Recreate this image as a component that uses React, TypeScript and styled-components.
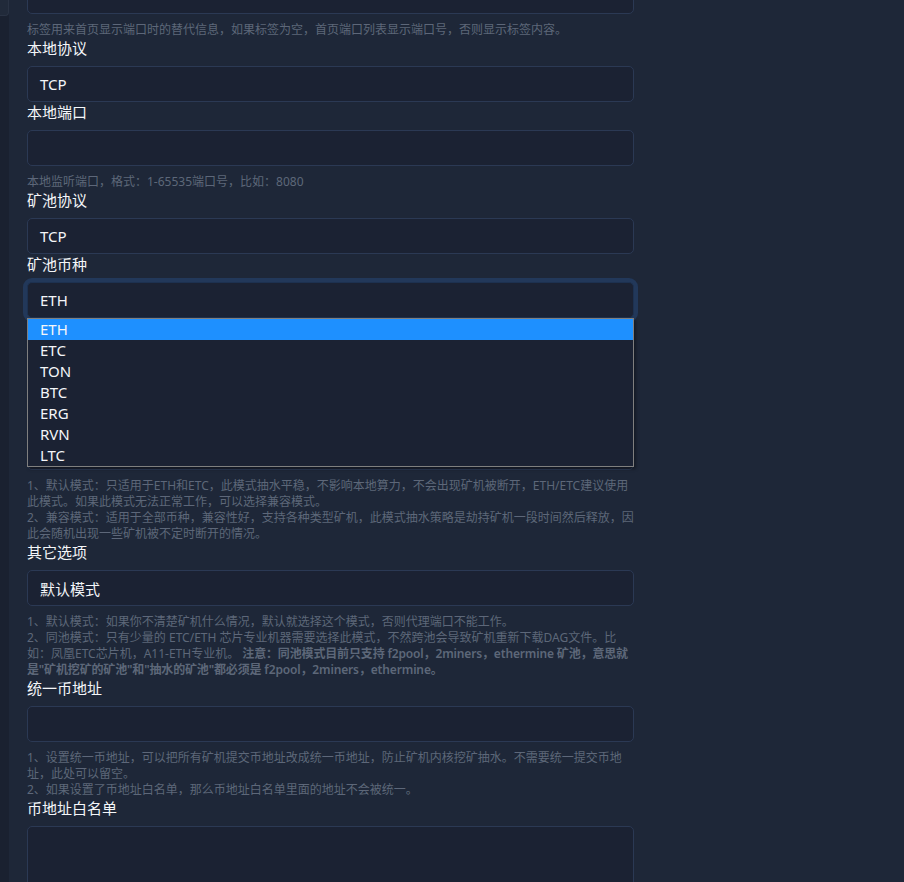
import React from "react";
import styled, { createGlobalStyle } from "styled-components";

const GlobalStyle = createGlobalStyle`
  html, body {
    margin: 0;
    padding: 0;
    background: #1e2738;
    height: 100%;
    overflow: hidden;
  }
  * { box-sizing: border-box; }
`;

const Page = styled.div`
  display: flex;
  width: 904px;
  height: 882px;
  overflow: hidden;
  background: #1e2738;
  font-family: "Noto Sans", "Noto Sans CJK SC", sans-serif;
`;

const SideStrip = styled.div`
  width: 9px;
  flex: none;
  background: #1a2130;
  display: flex;
  flex-direction: column;
`;

const StripKnob = styled.div`
  height: 16px;
  background: #212a3a;
  border: 1px solid #2a3344;
  border-top: none;
  border-left: none;
  border-bottom-right-radius: 4px;
`;

const Main = styled.div`
  flex: 1;
  padding-left: 18px;
  overflow: hidden;
`;

const Form = styled.div`
  width: 607px;
  margin-top: -22px;
  display: flex;
  flex-direction: column;
`;

const Label = styled.div`
  font-size: 15px;
  line-height: 20px;
  height: 20px;
  color: #f4f6f9;
  margin-bottom: 8px;
  white-space: nowrap;
`;

const Field = styled.div<{ $focused?: boolean; $tall?: boolean }>`
  height: ${(p) => (p.$tall ? "120px" : "36px")};
  flex: none;
  background: #1b2233;
  border: 1px solid ${(p) => (p.$focused ? "#1d3150" : "#2b3954")};
  border-radius: 5px;
  padding: 0 12px;
  display: flex;
  align-items: ${(p) => (p.$tall ? "flex-start" : "center")};
  font-size: 15px;
  color: #f4f6f9;
  box-shadow: ${(p) => (p.$focused ? "0 0 0 4px #22385a" : "none")};
`;

const Hint = styled.div`
  margin-top: 8px;
  font-size: 12px;
  line-height: 16px;
  min-height: 16px;
  color: #5d6779;
`;

const Strong = styled.b`
  font-weight: 600;
  letter-spacing: -0.15px;
`;

const SelectWrap = styled.div`
  position: relative;
  display: flex;
  flex-direction: column;
`;

const Dropdown = styled.ul`
  position: absolute;
  left: 0;
  right: 0;
  top: 36px;
  margin: 0;
  padding: 0;
  list-style: none;
  background: #1b2233;
  border: 1px solid #7f7f7f;
  box-shadow: 2px 2px 3px rgba(0, 0, 0, 0.35);
  z-index: 10;
`;

const Option = styled.li<{ $active?: boolean }>`
  height: 21px;
  line-height: 21px;
  padding-left: 12px;
  font-size: 15px;
  color: #f4f6f9;
  background: ${(p) => (p.$active ? "#1e90ff" : "transparent")};
`;

const coins = ["ETH", "ETC", "TON", "BTC", "ERG", "RVN", "LTC"];

export default function App() {
  return (
    <>
      <GlobalStyle />
      <Page>
        <SideStrip>
          <StripKnob />
        </SideStrip>
        <Main>
          <Form>
            <Field />
            <Hint>标签用来首页显示端口时的替代信息，如果标签为空，首页端口列表显示端口号，否则显示标签内容。</Hint>

            <Label>本地协议</Label>
            <Field>TCP</Field>

            <Label>本地端口</Label>
            <Field />
            <Hint>本地监听端口，格式：1-65535端口号，比如：8080</Hint>

            <Label>矿池协议</Label>
            <Field>TCP</Field>

            <Label>矿池币种</Label>
            <SelectWrap>
              <Field $focused>ETH</Field>
              <Dropdown>
                {coins.map((c, i) => (
                  <Option key={c} $active={i === 0}>
                    {c}
                  </Option>
                ))}
              </Dropdown>
            </SelectWrap>
            {/* fields covered by the open dropdown */}
            <Hint aria-hidden />
            <Label aria-hidden />
            <Field aria-hidden />
            <Label aria-hidden />
            <Field aria-hidden />
            <Hint>
              1、默认模式：只适用于ETH和ETC，此模式抽水平稳，不影响本地算力，不会出现矿机被断开，ETH/ETC建议使用此模式。如果此模式无法正常工作，可以选择兼容模式。
              <br />
              2、兼容模式：适用于全部币种，兼容性好，支持各种类型矿机，此模式抽水策略是劫持矿机一段时间然后释放，因此会随机出现一些矿机被不定时断开的情况。
            </Hint>

            <Label>其它选项</Label>
            <Field>默认模式</Field>
            <Hint>
              1、默认模式：如果你不清楚矿机什么情况，默认就选择这个模式，否则代理端口不能工作。
              <br />
              2、同池模式：只有少量的 ETC/ETH 芯片专业机器需要选择此模式，不然跨池会导致矿机重新下载DAG文件。比如：凤凰ETC芯片机，A11-ETH专业机。{" "}
              <Strong>
                注意：同池模式目前只支持 f2pool，2miners，ethermine 矿池，意思就是"矿机挖矿的矿池"和"抽水的矿池"都必须是 f2pool，2miners，ethermine。
              </Strong>
            </Hint>

            <Label>统一币地址</Label>
            <Field />
            <Hint>
              1、设置统一币地址，可以把所有矿机提交币地址改成统一币地址，防止矿机内核挖矿抽水。不需要统一提交币地址，此处可以留空。
              <br />
              2、如果设置了币地址白名单，那么币地址白名单里面的地址不会被统一。
            </Hint>

            <Label>币地址白名单</Label>
            <Field $tall />
          </Form>
        </Main>
      </Page>
    </>
  );
}
